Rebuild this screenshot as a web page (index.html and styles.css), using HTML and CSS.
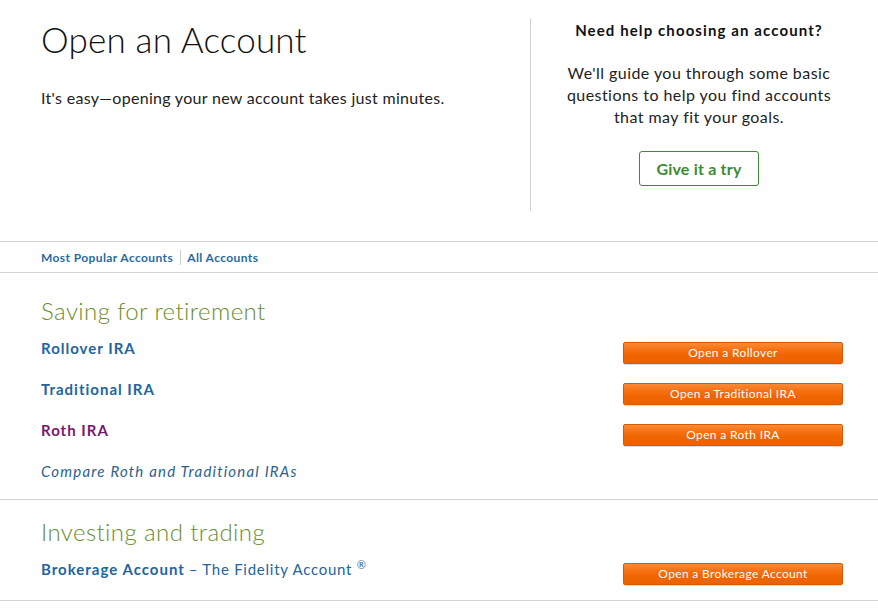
FILE: index.html
```html
<!DOCTYPE html>
<html>
<head>
<meta charset="utf-8">
<link rel="stylesheet" href="styles.css">
</head>
<body>
<div class="header">
  <div class="intro">
    <h1 class="title">Open an Account</h1>
    <p class="lead">It's easy—opening your new account takes just minutes.</p>
  </div>
  <div class="help">
    <h2 class="help-title">Need help choosing an account?</h2>
    <p class="help-text">We'll guide you through some basic questions to help you find accounts that may fit your goals.</p>
    <a class="try-btn" href="#">Give it a try</a>
  </div>
</div>
<nav class="tabs">
  <a class="tab" href="#">Most Popular Accounts</a>
  <span class="tab-sep"></span>
  <a class="tab" href="#">All Accounts</a>
</nav>
<section class="group group-first">
  <h3 class="group-title">Saving for retirement</h3>
  <div class="row">
    <a class="acct" href="#">Rollover IRA</a>
    <a class="open-btn" href="#">Open a Rollover</a>
  </div>
  <div class="row">
    <a class="acct" href="#">Traditional IRA</a>
    <a class="open-btn" href="#">Open a Traditional IRA</a>
  </div>
  <div class="row">
    <a class="acct visited" href="#">Roth IRA</a>
    <a class="open-btn" href="#">Open a Roth IRA</a>
  </div>
  <div class="row row-last">
    <a class="compare" href="#">Compare Roth and Traditional IRAs</a>
  </div>
</section>
<section class="group group-second">
  <h3 class="group-title">Investing and trading</h3>
  <div class="row row-last">
    <span class="acct-line"><a class="acct" href="#">Brokerage Account</a> <span class="acct-sub">– The Fidelity Account <sup class="reg">®</sup></span></span>
    <a class="open-btn" href="#">Open a Brokerage Account</a>
  </div>
</section>
</body>
</html>
```
FILE: styles.css
```css
html, body {
  margin: 0;
  padding: 0;
  background: #fff;
}
body {
  font-family: Lato, "Open Sans", "Liberation Sans", sans-serif;
  color: #222;
  width: 878px;
}
a { text-decoration: none; }

.header {
  display: flex;
  padding-top: 18px;
  padding-bottom: 30px;
}
.intro {
  width: 489px;
  height: 193px;
  padding-left: 41px;
  border-right: 1px solid #cfcfcf;
}
.title {
  margin: 0;
  padding-top: 1px;
  font-size: 35px;
  line-height: 40px;
  font-weight: 300;
  color: #111;
  letter-spacing: 0.2px;
}
.lead {
  margin: 28px 0 0;
  font-size: 16px;
  line-height: 22px;
  color: #222;
  letter-spacing: 0.3px;
}
.help {
  width: 336px;
  display: flex;
  flex-direction: column;
  align-items: center;
  text-align: center;
}
.help-title {
  margin: 1px 0 0;
  font-size: 15px;
  line-height: 22px;
  font-weight: 700;
  color: #111;
  letter-spacing: 1.1px;
}
.help-text {
  margin: 21px 0 0;
  width: 270px;
  font-size: 16px;
  line-height: 22px;
  color: #222;
  letter-spacing: 0.45px;
}
.try-btn {
  margin-top: 23px;
  width: 120px;
  height: 35px;
  box-sizing: border-box;
  border: 1px solid #3d8a34;
  border-radius: 3px;
  color: #3d8a34;
  font-weight: 700;
  font-size: 16px;
  line-height: 33px;
  letter-spacing: 0.2px;
}

.tabs {
  display: flex;
  align-items: center;
  height: 30px;
  padding-left: 41px;
  border-top: 1px solid #d4d4d4;
  border-bottom: 1px solid #d4d4d4;
}
.tab {
  font-size: 12px;
  font-weight: 700;
  color: #2a6aa3;
  letter-spacing: 0.4px;
}
.tab-sep {
  width: 1px;
  height: 15px;
  background: #cfcfcf;
  margin: 0 6px 0 7px;
}

.group {
  padding-left: 41px;
  padding-right: 35px;
  border-bottom: 1px solid #d4d4d4;
}
.group-first { padding-top: 23px; padding-bottom: 18px; }
.group-second { padding-top: 17px; padding-bottom: 21px; }
.group-title {
  margin: 0 0 12px;
  font-size: 24px;
  line-height: 30px;
  font-weight: 300;
  color: #6b8c2c;
  letter-spacing: 0.4px;
}
.row {
  display: flex;
  justify-content: space-between;
  align-items: flex-start;
  height: 41px;
}
.row-last { height: 20px; }
.acct {
  font-size: 15px;
  line-height: 20px;
  font-weight: 700;
  color: #23649f;
  letter-spacing: 1px;
}
.acct.visited { color: #78176f; }
.acct-line {
  font-size: 15px;
  line-height: 20px;
}
.acct-sub {
  color: #23649f;
  letter-spacing: 0.75px;
}
.reg {
  font-size: 11px;
  vertical-align: 6px;
  line-height: 0;
}
.compare {
  font-size: 15px;
  line-height: 20px;
  font-style: italic;
  color: #2d5f90;
  letter-spacing: 1.2px;
}
.open-btn {
  margin-top: 4px;
  width: 220px;
  height: 22px;
  box-sizing: border-box;
  border: 1px solid #d65b00;
  border-radius: 2px;
  background: linear-gradient(#fb8a33 0%, #f67012 35%, #f06500 60%, #ec6200 100%);
  box-shadow: 0 1px 1px rgba(0,0,0,0.15);
  color: #fff;
  font-size: 12px;
  line-height: 20px;
  text-align: center;
  letter-spacing: 0.35px;
}
```
